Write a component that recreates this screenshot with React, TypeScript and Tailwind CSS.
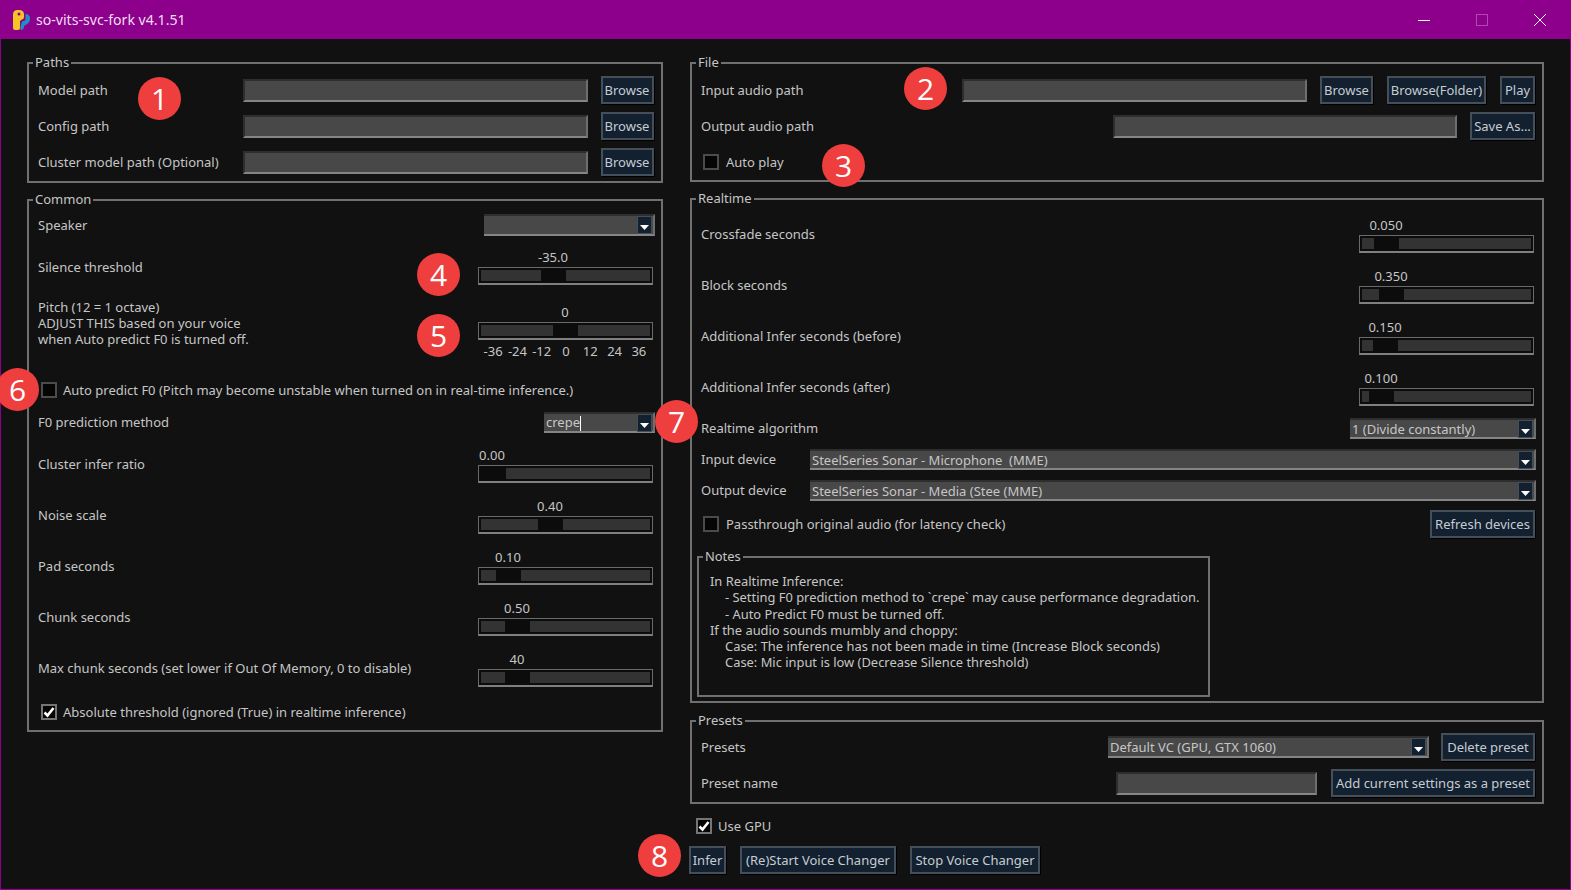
import React from "react";

const inputFrame = "border-t-2 border-l-2 border-b-2 border-r-2 border-t-[#2e2e2e] border-l-[#2e2e2e] border-b-[#858585] border-r-[#6e6e6e] bg-[#484848]";

function Button({ w, children }: { w: string; children: React.ReactNode }) {
  return (
    <div className={`${w} h-[28px] shrink-0 flex items-center justify-center pt-[2px] whitespace-nowrap bg-[#12202f] border-2 border-[#454f59] text-[#c6ccd2] shadow-[1px_1px_0_#000]`}>
      {children}
    </div>
  );
}

function TextBox({ w }: { w: string }) {
  return <div className={`${w} h-[23px] shrink-0 ${inputFrame}`} />;
}

function Combo({ w, text, h = "h-[21px]", caret }: { w: string; text?: string; h?: string; caret?: boolean }) {
  return (
    <div className={`${w} ${h} shrink-0 relative flex items-center pl-[2px] pr-[1px] whitespace-pre border-t-2 border-t-[#2e2e2e] border-b-2 border-b-[#858585] border-r-2 border-r-[#6e6e6e] bg-[#484848] text-[#c6c6c6]`}>
      <span className="flex-1 pt-[1px] leading-[15px]">
        {text}
        {caret && <span className="inline-block w-[1px] h-[15px] bg-white align-middle" />}
      </span>
      <span className="w-[15px] h-[18px] shrink-0 bg-[#12202f] border border-[#454f59] flex items-center justify-center pt-[5px]">
        <svg width="9" height="5" viewBox="0 0 9 5">
          <path d="M0 0h9L4.5 5z" fill="#fff" />
        </svg>
      </span>
    </div>
  );
}

function Checkbox({ checked }: { checked?: boolean }) {
  return (
    <span className={`w-[16px] h-[16px] shrink-0 bg-[#050505] border-2 flex items-center justify-center ${checked ? "border-[#757575]" : "border-[#4b4b4b]"}`}>
      {checked && (
        <svg width="12" height="12" viewBox="0 0 12 12">
          <path d="M1.5 6.5 4.5 9.5 10.5 2" fill="none" stroke="#fff" strokeWidth="2.6" />
        </svg>
      )}
    </span>
  );
}

function Group({ title, className, children }: { title: string; className: string; children: React.ReactNode }) {
  return (
    <div className={`relative border-2 border-[#707070] ${className}`}>
      <span className="absolute -top-[11px] left-[4px] bg-[#111111] px-[2px] leading-[18px] text-[#c6c6c6]">{title}</span>
      {children}
    </div>
  );
}

// thumb = distance of the handle from the slider's left edge
function Slider({ value, thumb, ticks }: { value: string; thumb: number; ticks?: boolean }) {
  return (
    <div className="w-[175px] shrink-0">
      <div className="h-[18px] leading-[16px] text-[#c6c6c6]">
        <div className="w-[80px] text-center" style={{ marginLeft: thumb + 12 - 40 }}>
          {value}
        </div>
      </div>
      <div className="h-[18px] flex border-t border-x border-[#6a6a6a] border-b-2 border-b-[#808080] bg-[#0c0c0c] p-[2px]">
        <div className="bg-[#333333]" style={{ width: Math.max(thumb - 3, 0) }} />
        <div className="w-[25px] shrink-0" />
        <div className="flex-1 bg-[#333333]" />
      </div>
      {ticks && (
        <div className="ml-[3px] mt-[2px] w-[170px] h-[18px] leading-[18px] grid grid-cols-7 text-center text-[#c6c6c6]">
          {["-36", "-24", "-12", "0", "12", "24", "36"].map((t) => (
            <span key={t}>{t}</span>
          ))}
        </div>
      )}
    </div>
  );
}

function SliderRow({ label, value, thumb, className, lift = true }: { label: string; value: string; thumb: number; className: string; lift?: boolean }) {
  return (
    <div className={`flex items-center pl-[9px] pr-[8px] ${className}`}>
      <span className={`flex-1 pt-[2px] ${lift ? "pb-[3px]" : "pb-[1px]"}`}>{label}</span>
      <Slider value={value} thumb={thumb} />
    </div>
  );
}

function Label({ className, children }: { className?: string; children: React.ReactNode }) {
  return <span className={`leading-[15px] ${className ?? "flex-1"}`}>{children}</span>;
}

function Badge({ n, pos }: { n: number; pos: string }) {
  return (
    <div className={`absolute ${pos} w-[43px] h-[43px] rounded-full bg-[#ef3e3e] flex items-center justify-center text-white text-[30px] leading-none font-['Open_Sans',sans-serif]`}>
      {n}
    </div>
  );
}

export default function App() {
  return (
    <div className="relative w-[1571px] h-[890px] overflow-hidden flex flex-col bg-[#111111] text-[#c6c6c6] text-[13px] font-['Noto_Sans',sans-serif]">
      {/* Title bar */}
      <div className="h-[39px] shrink-0 bg-[#8c008c] flex items-center text-[#f1dff1]">
        <svg className="ml-[13px]" width="18" height="20" viewBox="0 0 18 20">
          <path d="M0 4.5Q0 0 4.5 0L6 0Q11 0 11 4.5L11 7Q11 9 9 9.5L7 11L7 18Q7 20 5 20L2 20Q0 20 0 18Z" fill="#f7c427" />
          <circle cx="6" cy="4" r="1.5" fill="#8c008c" />
          <path d="M12.5 4Q17 4 17 8.5Q17 13 12.5 15L11 16Q11 20 8 20Q7 20 7.5 17L8.5 13Q9 11 10.5 11L11 11Q12.5 11 12.5 9Z" fill="#1f8fc0" />
        </svg>
        <span className="ml-[5px] text-[14.1px]">so-vits-svc-fork v4.1.51</span>
        <div className="ml-auto flex items-center mr-[25px] gap-[46px]">
          <svg width="12" height="12" viewBox="0 0 12 12">
            <path d="M0 6.5h12" stroke="#fff" strokeWidth="1" />
          </svg>
          <svg width="12" height="12" viewBox="0 0 12 12">
            <rect x="0.5" y="0.5" width="11" height="11" fill="none" stroke="#b148b1" />
          </svg>
          <svg width="12" height="12" viewBox="0 0 12 12">
            <path d="M0 0l12 12M12 0L0 12" stroke="#fff" strokeWidth="1" />
          </svg>
        </div>
      </div>

      {/* Window body */}
      <div className="flex-1 flex border-x border-b border-[#8c008c] pl-[26px] pt-[23px] gap-[27px]">
        {/* Left column */}
        <div className="w-[636px] shrink-0 flex flex-col">
          <Group title="Paths" className="h-[121px] pt-[8px]">
            {["Model path", "Config path", "Cluster model path (Optional)"].map((label) => (
              <div key={label} className="h-[36px] flex items-center pl-[9px]">
                <Label className="w-[204.5px] shrink-0">{label}</Label>
                <TextBox w="w-[345px]" />
                <div className="ml-[13px]">
                  <Button w="w-[53px]">Browse</Button>
                </div>
              </div>
            ))}
          </Group>

          <Group title="Common" className="mt-[16px] h-[533px]">
            <div className="mt-[13px] flex items-center pl-[9px] pr-[6px]">
              <Label>Speaker</Label>
              <Combo w="w-[171px]" h="h-[22px]" />
            </div>
            <SliderRow className="mt-[13px]" label="Silence threshold" value="-35.0" thumb={63} lift={false} />
            <div className="mt-[15px] h-[60px] flex pl-[9px] pr-[8px]">
              <p className="flex-1 -mt-[1px] leading-[16px]">
                Pitch (12 = 1 octave)
                <br />
                ADJUST THIS based on your voice
                <br />
                when Auto predict F0 is turned off.
              </p>
              <div className="mt-[4px]">
                <Slider value="0" thumb={75} ticks />
              </div>
            </div>
            <div className="mt-[22px] h-[16px] flex items-center gap-[6px] pl-[12px]">
              <Checkbox />
              <Label className="whitespace-nowrap">Auto predict F0 (Pitch may become unstable when turned on in real-time inference.)</Label>
            </div>
            <div className="mt-[14px] flex items-center pl-[9px] pr-[6px]">
              <Label>F0 prediction method</Label>
              <Combo w="w-[111px]" text="crepe" caret />
            </div>
            <SliderRow className="mt-[14px]" label="Cluster infer ratio" value="0.00" thumb={2} />
            <SliderRow className="mt-[15px]" label="Noise scale" value="0.40" thumb={60} />
            <SliderRow className="mt-[15px]" label="Pad seconds" value="0.10" thumb={18} />
            <SliderRow className="mt-[15px]" label="Chunk seconds" value="0.50" thumb={27} />
            <SliderRow className="mt-[15px]" label="Max chunk seconds (set lower if Out Of Memory, 0 to disable)" value="40" thumb={27} />
            <div className="mt-[17px] h-[16px] flex items-center gap-[6px] pl-[12px]">
              <Checkbox checked />
              <Label className="whitespace-nowrap">Absolute threshold (ignored (True) in realtime inference)</Label>
            </div>
          </Group>
        </div>

        {/* Right column */}
        <div className="w-[854px] shrink-0 flex flex-col">
          <Group title="File" className="h-[120px] pt-[8px]">
            <div className="h-[36px] flex items-center pl-[9px] pr-[7px]">
              <Label>Input audio path</Label>
              <TextBox w="w-[345px]" />
              <div className="ml-[13px] flex gap-[14px]">
                <Button w="w-[53px]">Browse</Button>
                <Button w="w-[99px]">Browse(Folder)</Button>
                <Button w="w-[35px]">Play</Button>
              </div>
            </div>
            <div className="h-[36px] flex items-center pl-[9px] pr-[7px]">
              <Label>Output audio path</Label>
              <TextBox w="w-[344px]" />
              <div className="ml-[13px]">
                <Button w="w-[65px]">Save As...</Button>
              </div>
            </div>
            <div className="h-[36px] flex items-center gap-[7px] pl-[11px]">
              <Checkbox />
              <Label>Auto play</Label>
            </div>
          </Group>

          <Group title="Realtime" className="mt-[16px] h-[505px] pt-[17px]">
            <SliderRow className="" label="Crossfade seconds" value="0.050" thumb={15} />
            <SliderRow className="mt-[15px]" label="Block seconds" value="0.350" thumb={20} />
            <SliderRow className="mt-[15px]" label="Additional Infer seconds (before)" value="0.150" thumb={14} />
            <SliderRow className="mt-[15px]" label="Additional Infer seconds (after)" value="0.100" thumb={10} />
            <div className="mt-[12px] flex items-center pl-[9px] pr-[6px]">
              <Label>Realtime algorithm</Label>
              <Combo w="w-[186px]" text="1 (Divide constantly)" />
            </div>
            <div className="mt-[10px] flex items-center pl-[9px] pr-[6px]">
              <Label className="w-[109px] shrink-0">Input device</Label>
              <Combo w="flex-1" text="SteelSeries Sonar - Microphone  (MME)" />
            </div>
            <div className="mt-[10px] flex items-center pl-[9px] pr-[6px]">
              <Label className="w-[109px] shrink-0">Output device</Label>
              <Combo w="flex-1" text="SteelSeries Sonar - Media (Stee (MME)" />
            </div>
            <div className="mt-[9px] flex items-center gap-[7px] pl-[11px] pr-[7px]">
              <Checkbox />
              <Label>Passthrough original audio (for latency check)</Label>
              <Button w="w-[105px]">Refresh devices</Button>
            </div>
            <Group title="Notes" className="mt-[18px] ml-[5px] w-[513px] h-[141px] pt-[15px] pl-[11px] leading-[16.3px] text-[12.9px] text-[#c6c6c6]">
              <p>In Realtime Inference:</p>
              <p className="pl-[15px]">- Setting F0 prediction method to `crepe` may cause performance degradation.</p>
              <p className="pl-[15px]">- Auto Predict F0 must be turned off.</p>
              <p>If the audio sounds mumbly and choppy:</p>
              <p className="pl-[15px]">Case: The inference has not been made in time (Increase Block seconds)</p>
              <p className="pl-[15px]">Case: Mic input is low (Decrease Silence threshold)</p>
            </Group>
          </Group>

          <Group title="Presets" className="mt-[17px] h-[84px] pt-[7px]">
            <div className="h-[36px] flex items-center pl-[9px] pr-[7px]">
              <Label>Presets</Label>
              <Combo w="w-[321px]" h="h-[22px]" text="Default VC (GPU, GTX 1060)" />
              <div className="ml-[12px]">
                <Button w="w-[94px]">Delete preset</Button>
              </div>
            </div>
            <div className="h-[36px] flex items-center pl-[9px] pr-[7px]">
              <Label>Preset name</Label>
              <TextBox w="w-[201px]" />
              <div className="ml-[14px]">
                <Button w="w-[204px]">Add current settings as a preset</Button>
              </div>
            </div>
          </Group>

          <div className="mt-[14px] ml-[6px] h-[16px] flex items-center gap-[6px]">
            <Checkbox checked />
            <Label>Use GPU</Label>
          </div>
          <div className="mt-[12px] -ml-[1px] flex gap-[14px]">
            <Button w="w-[37px]">Infer</Button>
            <Button w="w-[156px]">(Re)Start Voice Changer</Button>
            <Button w="w-[130px]">Stop Voice Changer</Button>
          </div>
        </div>
      </div>

      {/* Numbered markers over the window */}
      <Badge n={1} pos="left-[138px] top-[77px]" />
      <Badge n={2} pos="left-[904px] top-[67px]" />
      <Badge n={3} pos="left-[822px] top-[144px]" />
      <Badge n={4} pos="left-[417px] top-[253px]" />
      <Badge n={5} pos="left-[417px] top-[314px]" />
      <Badge n={6} pos="-left-[4px] top-[368px]" />
      <Badge n={7} pos="left-[655px] top-[400px]" />
      <Badge n={8} pos="left-[638px] top-[834px]" />
    </div>
  );
}
